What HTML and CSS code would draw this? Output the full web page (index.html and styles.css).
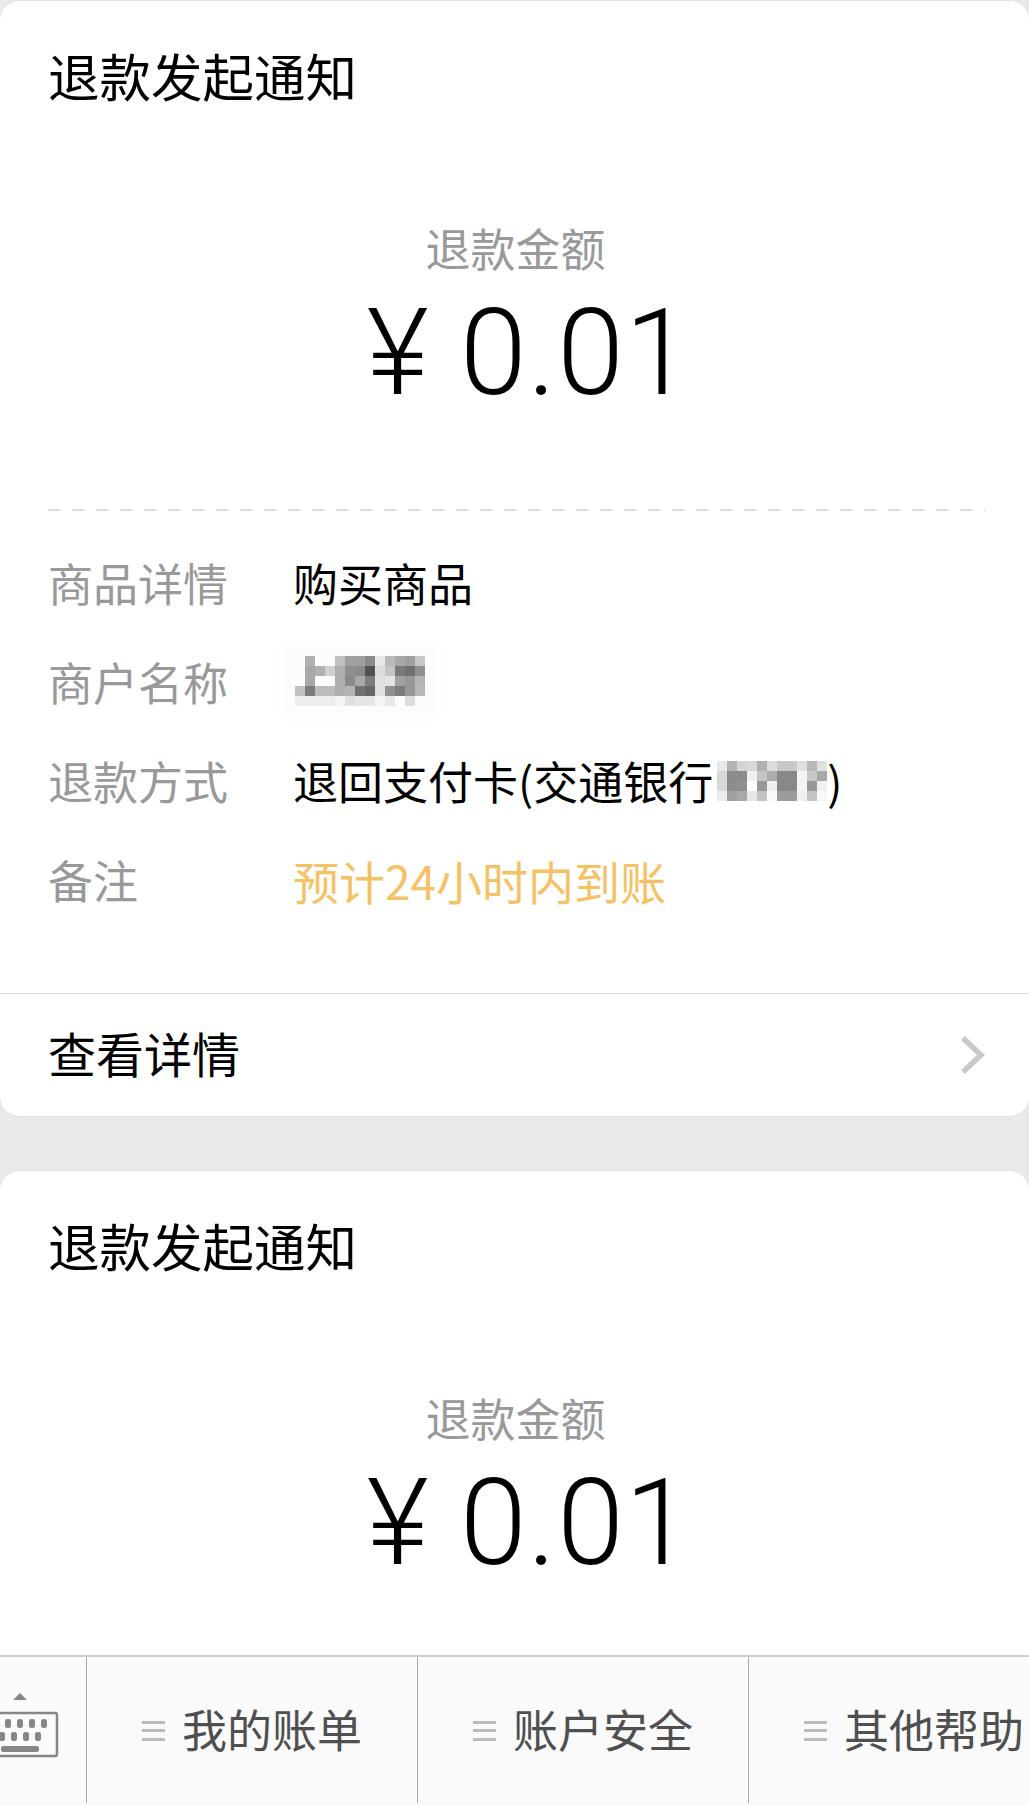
FILE: index.html
```html
<!DOCTYPE html>
<html lang="zh">
<head>
  <meta charset="UTF-8">
  <title>退款发起通知</title>
  <meta name="viewport" content="width=device-width, initial-scale=1.0">
  <link rel="stylesheet" href="styles.css">
</head>
<body>
  <div class="card">
    <h2 class="card-title">退款发起通知</h2>
    <div class="amount-box">
      <div class="amount-label">退款金额</div>
      <div class="amount-value">¥ 0.01</div>
    </div>
    <div class="detail-list">
      <div class="detail-row">
        <div class="detail-key">商品详情</div>
        <div class="detail-val">购买商品</div>
      </div>
      <div class="detail-row">
        <div class="detail-key">商户名称</div>
        <div class="detail-val">
          <svg class="mosaic mosaic-name" viewBox="0 0 13 5" shape-rendering="crispEdges" role="img" aria-label="已打码">
            <rect x="1" y="0" width="1" height="1" fill="#b0b0b0"/><rect x="4" y="0" width="1" height="1" fill="#c0c0c0"/><rect x="5" y="0" width="1" height="1" fill="#a0a0a0"/><rect x="6" y="0" width="1" height="1" fill="#a0a0a0"/><rect x="7" y="0" width="1" height="1" fill="#8a8a8a"/><rect x="8" y="0" width="1" height="1" fill="#e8e8e8"/><rect x="9" y="0" width="1" height="1" fill="#b8b8b8"/><rect x="10" y="0" width="1" height="1" fill="#a8a8a8"/><rect x="11" y="0" width="1" height="1" fill="#a0a0a0"/><rect x="12" y="0" width="1" height="1" fill="#c8c8c8"/>
            <rect x="1" y="1" width="1" height="1" fill="#a8a8a8"/><rect x="2" y="1" width="1" height="1" fill="#b0b0b0"/><rect x="3" y="1" width="1" height="1" fill="#d0d0d0"/><rect x="4" y="1" width="1" height="1" fill="#b0b0b0"/><rect x="5" y="1" width="1" height="1" fill="#8f8f8f"/><rect x="6" y="1" width="1" height="1" fill="#8a8a8a"/><rect x="7" y="1" width="1" height="1" fill="#505050"/><rect x="8" y="1" width="1" height="1" fill="#dcdcdc"/><rect x="9" y="1" width="1" height="1" fill="#c4c4c4"/><rect x="10" y="1" width="1" height="1" fill="#7a7a7a"/><rect x="11" y="1" width="1" height="1" fill="#707070"/><rect x="12" y="1" width="1" height="1" fill="#909090"/>
            <rect x="1" y="2" width="1" height="1" fill="#a8a8a8"/><rect x="4" y="2" width="1" height="1" fill="#b0b0b0"/><rect x="5" y="2" width="1" height="1" fill="#8a8a8a"/><rect x="6" y="2" width="1" height="1" fill="#a8a8a8"/><rect x="7" y="2" width="1" height="1" fill="#7c7c7c"/><rect x="8" y="2" width="1" height="1" fill="#e0e0e0"/><rect x="9" y="2" width="1" height="1" fill="#e4e4e4"/><rect x="10" y="2" width="1" height="1" fill="#a0a0a0"/><rect x="11" y="2" width="1" height="1" fill="#989898"/><rect x="12" y="2" width="1" height="1" fill="#b4b4b4"/>
            <rect x="0" y="3" width="1" height="1" fill="#c0c0c0"/><rect x="1" y="3" width="1" height="1" fill="#7c7c7c"/><rect x="2" y="3" width="1" height="1" fill="#bcbcbc"/><rect x="3" y="3" width="1" height="1" fill="#bcbcbc"/><rect x="4" y="3" width="1" height="1" fill="#b0b0b0"/><rect x="5" y="3" width="1" height="1" fill="#b4b4b4"/><rect x="6" y="3" width="1" height="1" fill="#707070"/><rect x="7" y="3" width="1" height="1" fill="#666666"/><rect x="8" y="3" width="1" height="1" fill="#e0e0e0"/><rect x="9" y="3" width="1" height="1" fill="#909090"/><rect x="10" y="3" width="1" height="1" fill="#7c7c7c"/><rect x="11" y="3" width="1" height="1" fill="#989898"/><rect x="12" y="3" width="1" height="1" fill="#b8b8b8"/>
            <rect x="0" y="4" width="4" height="1" fill="#eeeeee"/><rect x="4" y="4" width="1" height="1" fill="#f4f4f4"/><rect x="5" y="4" width="1" height="1" fill="#e0e0e0"/><rect x="6" y="4" width="2" height="1" fill="#e6e6e6"/><rect x="8" y="4" width="1" height="1" fill="#f4f4f4"/><rect x="9" y="4" width="1" height="1" fill="#e8e8e8"/><rect x="11" y="4" width="1" height="1" fill="#dcdcdc"/>
          </svg>
        </div>
      </div>
      <div class="detail-row">
        <div class="detail-key">退款方式</div>
        <div class="detail-val">退回支付卡(交通银行<svg class="mosaic mosaic-card" viewBox="0 0 11 4" shape-rendering="crispEdges" role="img" aria-label="已打码">
            <rect x="0" y="0" width="1" height="1" fill="#e8e8e8"/><rect x="1" y="0" width="1" height="1" fill="#b4b4b4"/><rect x="2" y="0" width="1" height="1" fill="#d4d4d4"/><rect x="3" y="0" width="1" height="1" fill="#d8d8d8"/><rect x="4" y="0" width="1" height="1" fill="#b0b0b0"/><rect x="5" y="0" width="1" height="1" fill="#dcdcdc"/><rect x="6" y="0" width="2" height="1" fill="#c8c8c8"/><rect x="8" y="0" width="1" height="1" fill="#e0e0e0"/><rect x="9" y="0" width="1" height="1" fill="#b8b8b8"/><rect x="10" y="0" width="1" height="1" fill="#e0e0e0"/>
            <rect x="0" y="1" width="1" height="1" fill="#d8d8d8"/><rect x="1" y="1" width="2" height="1" fill="#8c8c8c"/><rect x="3" y="1" width="1" height="1" fill="#f0f0f0"/><rect x="4" y="1" width="1" height="1" fill="#c4c4c4"/><rect x="5" y="1" width="1" height="1" fill="#acacac"/><rect x="6" y="1" width="2" height="1" fill="#888888"/><rect x="8" y="1" width="1" height="1" fill="#f4f4f4"/><rect x="9" y="1" width="1" height="1" fill="#c8c8c8"/><rect x="10" y="1" width="1" height="1" fill="#a8a8a8"/>
            <rect x="0" y="2" width="1" height="1" fill="#d8d8d8"/><rect x="1" y="2" width="1" height="1" fill="#8c8c8c"/><rect x="2" y="2" width="1" height="1" fill="#909090"/><rect x="4" y="2" width="1" height="1" fill="#989898"/><rect x="5" y="2" width="1" height="1" fill="#f0f0f0"/><rect x="6" y="2" width="2" height="1" fill="#888888"/><rect x="8" y="2" width="1" height="1" fill="#f4f4f4"/><rect x="9" y="2" width="1" height="1" fill="#989898"/><rect x="10" y="2" width="1" height="1" fill="#f0f0f0"/>
            <rect x="0" y="3" width="1" height="1" fill="#ececec"/><rect x="1" y="3" width="1" height="1" fill="#a0a0a0"/><rect x="2" y="3" width="1" height="1" fill="#a8a8a8"/><rect x="3" y="3" width="1" height="1" fill="#e8e8e8"/><rect x="4" y="3" width="1" height="1" fill="#c4c4c4"/><rect x="5" y="3" width="1" height="1" fill="#fafafa"/><rect x="6" y="3" width="2" height="1" fill="#9c9c9c"/><rect x="8" y="3" width="1" height="1" fill="#f0f0f0"/><rect x="9" y="3" width="1" height="1" fill="#c4c4c4"/><rect x="10" y="3" width="1" height="1" fill="#f8f8f8"/>
          </svg>)</div>
      </div>
      <div class="detail-row">
        <div class="detail-key">备注</div>
        <div class="detail-val detail-note">预计24小时内到账</div>
      </div>
    </div>
    <div class="card-footer">
      <span>查看详情</span>
      <svg class="chevron" viewBox="0 0 28 42"><path d="M4 4 L22 21 L4 38" fill="none" stroke="#c8c8cd" stroke-width="5.5"/></svg>
    </div>
  </div>

  <div class="card">
    <h2 class="card-title">退款发起通知</h2>
    <div class="amount-box">
      <div class="amount-label">退款金额</div>
      <div class="amount-value">¥ 0.01</div>
    </div>
  </div>

  <div class="menu-bar">
    <div class="menu-kbd">
      <svg viewBox="0 0 86 70" class="kbd-icon">
        <path d="M13 8 L20 1 L27 8 Z" fill="#85868c"/>
        <rect x="-8" y="21" width="65" height="43" rx="2" fill="none" stroke="#85868c" stroke-width="2.5"/>
        <g fill="#85868c">
          <rect x="5" y="27" width="6" height="9" rx="2.5"/><rect x="17" y="27" width="6" height="9" rx="2.5"/><rect x="29" y="27" width="6" height="9" rx="2.5"/><rect x="41" y="27" width="6" height="9" rx="2.5"/>
          <rect x="-1" y="40" width="6" height="9" rx="2.5"/><rect x="11" y="40" width="6" height="9" rx="2.5"/><rect x="23" y="40" width="6" height="9" rx="2.5"/><rect x="35" y="40" width="6" height="9" rx="2.5"/>
          <rect x="1" y="54" width="38" height="6" rx="2.5"/>
        </g>
      </svg>
    </div>
    <div class="menu-item"><span class="menu-lines"></span><span class="menu-text">我的账单</span></div>
    <div class="menu-item"><span class="menu-lines"></span><span class="menu-text">账户安全</span></div>
    <div class="menu-item"><span class="menu-lines"></span><span class="menu-text">其他帮助</span></div>
  </div>
</body>
</html>
```

FILE: styles.css
```css
html, body {
  margin: 0;
  height: 1806px;
  overflow: hidden;
}

body {
  background: #e9e9e9;
  font-family: "Noto Sans CJK SC", "Liberation Sans", sans-serif;
  color: #000;
}

.card {
  background: #fff;
  border: solid #e2e2e2;
  border-width: 1px 0;
  border-radius: 20px;
  margin-bottom: 53px;
}

.card-title {
  margin: 0;
  padding: 37px 48px 0;
  font-size: 51.5px;
  font-weight: 400;
  line-height: 74px;
}

.amount-box {
  margin: 106px 44px 0 48px;
  padding-bottom: 93px;
  background: repeating-linear-gradient(90deg, #dddddd 0 12px, transparent 12px 24px) bottom / 100% 2px no-repeat;
  text-align: center;
}

.card + .card .amount-box {
  background: none;
}

.amount-label {
  padding-right: 2px;
  font-size: 45px;
  line-height: 60px;
  color: #999;
}

.amount-value {
  margin-top: 10px;
  padding-left: 26px;
  font-family: Roboto, "Liberation Sans", sans-serif;
  font-size: 120px;
  font-weight: 300;
  letter-spacing: 1px;
  line-height: 130px;
}

.detail-list {
  padding: 22px 44px 64px 48px;
}

.detail-row {
  display: flex;
  align-items: center;
  height: 99px;
  font-size: 45px;
}

.detail-key {
  width: 245px;
  color: #999;
}

.detail-val {
  display: flex;
  align-items: center;
}

.detail-note {
  font-size: 46px;
  color: #f6c165;
}

.mosaic {
  display: block;
}

.mosaic-name {
  width: 134px;
  height: 50px;
  margin-top: -1px;
  box-shadow: 0 0 14px 12px #fcfcfc;
  background: #fcfcfc;
}

.mosaic-card {
  width: 110px;
  height: 44px;
  margin-left: 4px;
}

.card-footer {
  display: flex;
  align-items: center;
  justify-content: space-between;
  height: 116px;
  padding: 0 42px 6px 48px;
  border-top: 1px solid #dcdcdc;
  font-size: 48px;
}

.chevron {
  width: 28px;
  height: 42px;
  margin-top: 6px;
}

.menu-bar {
  position: fixed;
  left: 0;
  right: 0;
  bottom: 0;
  display: flex;
  height: 146px;
  padding-bottom: 3px;
  background: #fafafa;
  border-top: 2px solid #cccccc;
  overflow: hidden;
}

.menu-kbd {
  flex: 0 0 87px;
  border-right: 1px solid #aaa;
  box-sizing: border-box;
}

.kbd-icon {
  display: block;
  width: 86px;
  height: 70px;
  margin-top: 35px;
  overflow: visible;
}

.menu-item {
  flex: 0 0 331px;
  box-sizing: border-box;
  display: flex;
  align-items: center;
  padding-left: 55px;
  border-right: 1px solid #aaa;
  font-size: 45px;
  color: #4f4f4f;
}

.menu-item:last-child {
  border-right: 0;
}

.menu-lines {
  flex: none;
  width: 23px;
  height: 3px;
  margin-right: 17px;
  background: #bbb;
  box-shadow: 0 -8px 0 #bbb, 0 9px 0 #bbb;
}

.menu-text {
  margin-top: -4px;
}
```
